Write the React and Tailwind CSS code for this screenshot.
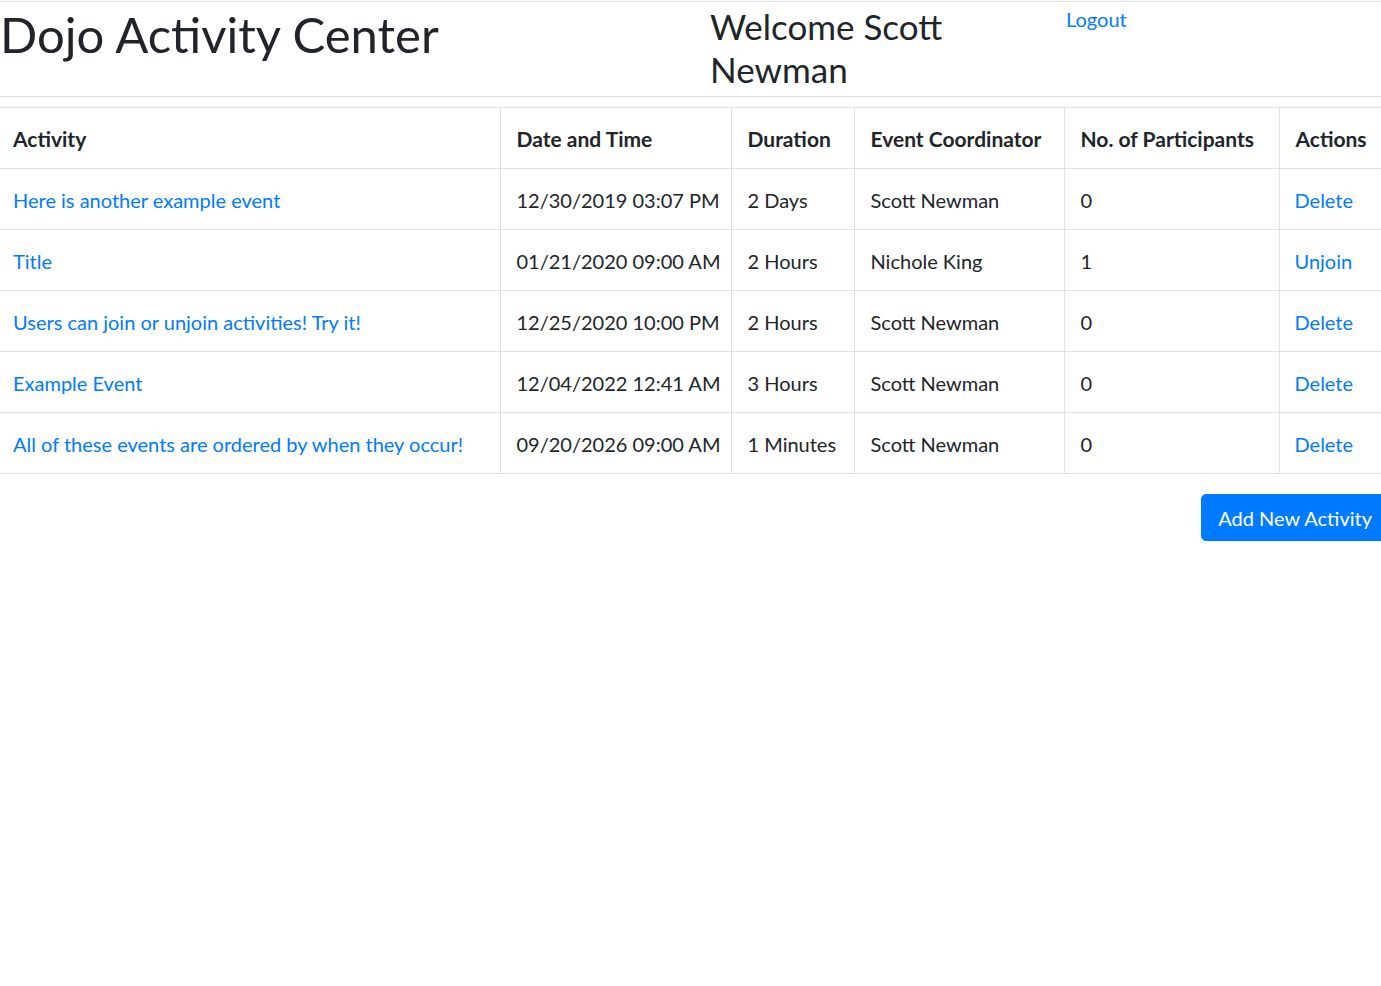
const activities = [
  { title: "Here is another example event", date: "12/30/2019 03:07 PM", duration: "2 Days", coordinator: "Scott Newman", participants: 0, action: "Delete" },
  { title: "Title", date: "01/21/2020 09:00 AM", duration: "2 Hours", coordinator: "Nichole King", participants: 1, action: "Unjoin" },
  { title: "Users can join or unjoin activities! Try it!", date: "12/25/2020 10:00 PM", duration: "2 Hours", coordinator: "Scott Newman", participants: 0, action: "Delete" },
  { title: "Example Event", date: "12/04/2022 12:41 AM", duration: "3 Hours", coordinator: "Scott Newman", participants: 0, action: "Delete" },
  { title: "All of these events are ordered by when they occur!", date: "09/20/2026 09:00 AM", duration: "1 Minutes", coordinator: "Scott Newman", participants: 0, action: "Delete" },
];

const columns = [
  { label: "Activity", width: "w-[500px]" },
  { label: "Date and Time", width: "w-[231px]" },
  { label: "Duration", width: "w-[123px]" },
  { label: "Event Coordinator", width: "w-[210px]" },
  { label: "No. of Participants", width: "w-[215px]" },
  { label: "Actions", width: "w-[102px]" },
];

export default function App() {
  return (
    <div className="w-[1381px] min-h-[986px] bg-white overflow-hidden text-[#212529] font-['Lato','Liberation_Sans',sans-serif]">
      <header className="mt-px border-t border-b border-[#dee2e6] h-[96px] flex">
        <h1 className="w-[710px] text-[49px] leading-[1.2] mt-[3px]">Dojo Activity Center</h1>
        <h2 className="w-[356px] pr-[40px] text-[35px] leading-[43px] mt-[3px]">Welcome Scott Newman</h2>
        <a href="#" className="text-[20px] leading-[30px] mt-[2px] text-[#007bff]">Logout</a>
      </header>

      <table className="w-[1381px] mt-[10px] table-fixed border-collapse text-[20px] leading-[30px] whitespace-nowrap">
        <thead>
          <tr className="border-t border-b border-[#dee2e6]">
            {columns.map((c, i) => (
              <th
                key={c.label}
                className={`${c.width} h-[61px] pt-[2px] ${i === 0 ? "px-[13px]" : "px-[16px] border-l border-[#dee2e6]"} text-left text-[21px] font-bold`}
              >
                {c.label}
              </th>
            ))}
          </tr>
        </thead>
        <tbody>
          {activities.map((a) => (
            <tr key={a.title} className="border-b border-[#dee2e6]">
              <td className="h-[61px] pt-[2px] px-[13px]">
                <a href="#" className="text-[#007bff]">{a.title}</a>
              </td>
              <td className="pt-[2px] px-[16px] border-l border-[#dee2e6]">{a.date}</td>
              <td className="pt-[2px] px-[16px] border-l border-[#dee2e6]">{a.duration}</td>
              <td className="pt-[2px] px-[16px] border-l border-[#dee2e6]">{a.coordinator}</td>
              <td className="pt-[2px] px-[16px] border-l border-[#dee2e6]">{a.participants}</td>
              <td className="pt-[2px] px-[15px] border-l border-[#dee2e6]">
                <a href="#" className="text-[#007bff]">{a.action}</a>
              </td>
            </tr>
          ))}
        </tbody>
      </table>

      <div className="flex justify-end mt-[20px] mr-[-8px]">
        <button className="bg-[#007bff] text-white text-[20px] leading-[30px] px-[16px] py-[7.5px] rounded-[5px] border border-[#007bff]">
          Add New Activity
        </button>
      </div>
    </div>
  );
}
